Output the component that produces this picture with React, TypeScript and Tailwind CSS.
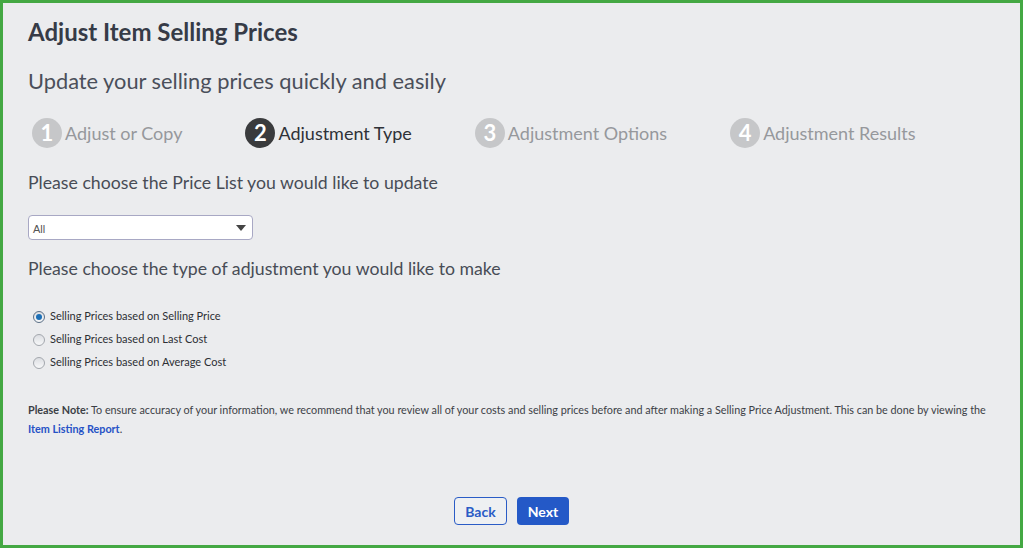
import React, { useState } from 'react';

const steps = [
  { n: 1, label: 'Adjust or Copy' },
  { n: 2, label: 'Adjustment Type' },
  { n: 3, label: 'Adjustment Options' },
  { n: 4, label: 'Adjustment Results' },
];

const options = [
  'Selling Prices based on Selling Price',
  'Selling Prices based on Last Cost',
  'Selling Prices based on Average Cost',
];

export default function App() {
  const [choice, setChoice] = useState(0);
  const active = 2;

  return (
    <div className="w-[1023px] h-[548px] border-[3px] border-[#44a843] bg-[#ebecee] font-['Lato','Noto_Sans',sans-serif] text-[#3b3f4a] overflow-hidden">
      <div className="pl-[25px] pt-[14px] flex flex-col">
        <h1 className="text-[24px] font-bold leading-[30px] text-[#363b47]">Adjust Item Selling Prices</h1>
        <h2 className="mt-[20px] text-[21.8px] leading-[28px] text-[#4a4f5a]">Update your selling prices quickly and easily</h2>

        {/* Wizard steps */}
        <div className="mt-[23px] flex items-center gap-[63px] pl-[4px]">
          {steps.map((s) => {
            const on = s.n === active;
            return (
              <div key={s.n} className="flex items-center gap-[3px]">
                <span
                  className={`w-[30px] h-[30px] rounded-full flex items-center justify-center text-white font-bold text-[22px] leading-none ${
                    on ? 'bg-[#3a3b3d]' : 'bg-[#c6c7c9]'
                  }`}
                >
                  {s.n}
                </span>
                <span className={`text-[18px] leading-[30px] ${on ? 'text-[#2f3238]' : 'text-[#96989c]'}`}>{s.label}</span>
              </div>
            );
          })}
        </div>

        <p className="mt-[23px] text-[17.7px] leading-[24px] text-[#484c56]">Please choose the Price List you would like to update</p>

        <div className="mt-[20px] relative w-[225px] h-[25px] bg-white border border-[#a8a8c4] rounded-[4px] flex items-center pl-[4px]">
          <span className="text-[11px] text-[#555] font-['Liberation_Sans',sans-serif] mt-[4px]">All</span>
          <svg className="absolute right-[6px] top-[9px]" width="10" height="6" viewBox="0 0 10 6">
            <path d="M0 0 L10 0 L5 6 Z" fill="#444" />
          </svg>
        </div>

        <p className="mt-[17px] text-[17.7px] leading-[24px] text-[#484c56]">Please choose the type of adjustment you would like to make</p>

        <div className="mt-[28px] flex flex-col gap-[8px] pl-[5px]">
          {options.map((o, i) => (
            <label key={o} className="flex items-center gap-[5px] h-[15px] cursor-pointer" onClick={() => setChoice(i)}>
              <span
                className={`w-[12px] h-[12px] rounded-full border flex items-center justify-center bg-gradient-to-b from-[#dcdee2] to-[#f7f8f9] ${
                  choice === i ? 'border-[#5b6f86]' : 'border-[#a3a7ad]'
                }`}
              >
                {choice === i && <span className="w-[6px] h-[6px] rounded-full bg-[#1c6fb6]" />}
              </span>
              <span className="text-[11px] text-[#2d2f34]">{o}</span>
            </label>
          ))}
        </div>

        <p className="mt-[30px] text-[10.8px] leading-[19px] text-[#3c3f46] w-[975px]">
          <span className="font-bold">Please Note:</span> To ensure accuracy of your information, we recommend that you review all of your costs and selling prices before and after making a Selling Price Adjustment. This can be done by viewing the{' '}
          <a className="font-bold text-[#2652c6]" href="#">Item Listing Report</a>.
        </p>

        <div className="mt-[59px] flex justify-center gap-[10px] pr-[25px]">
          <button className="w-[53px] h-[28px] border border-[#2a5cc6] rounded-[4px] text-[#2a5cc6] text-[14px] font-bold bg-[#eef0f2]">Back</button>
          <button className="w-[52px] h-[28px] rounded-[4px] bg-[#2459c7] text-white text-[14px] font-bold">Next</button>
        </div>
      </div>
    </div>
  );
}
